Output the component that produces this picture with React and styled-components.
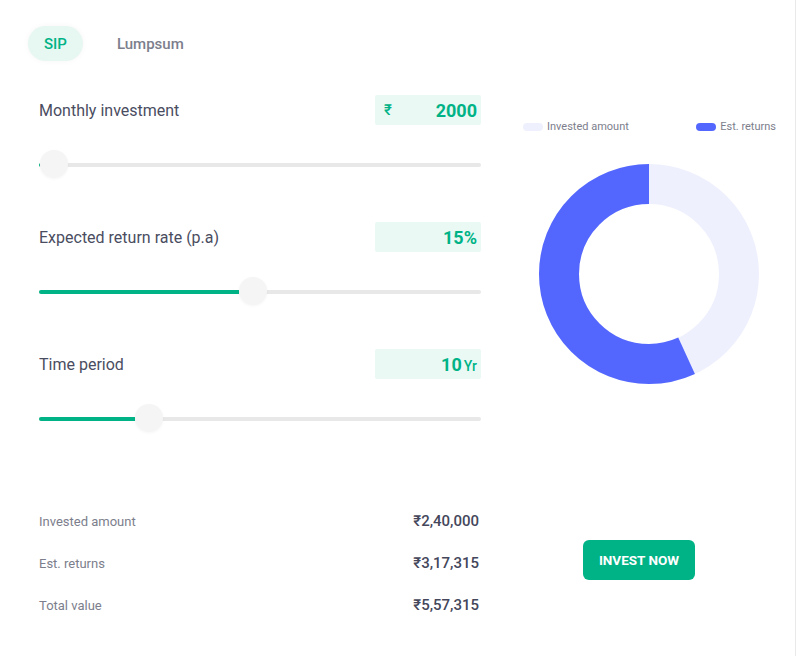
import React from "react";
import styled, { createGlobalStyle } from "styled-components";

const Global = createGlobalStyle`
  * { box-sizing: border-box; }
  html, body { margin: 0; padding: 0; background: #ffffff; }
  body { font-family: Roboto, "Noto Sans", Arial, sans-serif; -webkit-font-smoothing: antialiased; }
`;

const Card = styled.div`
  width: 796px;
  min-height: 656px;
  border-right: 1px solid #e9e9eb;
  background: #fff;
  padding: 26px 0 0 0;
`;

const Tabs = styled.div`
  display: flex;
  align-items: center;
  gap: 19px;
  padding-left: 28px;
`;

const Tab = styled.button`
  border: none;
  font-family: Roboto, Arial, sans-serif;
  font-size: 15px;
  font-weight: 500;
  height: 35px;
  padding: 0 ${(p) => (p.$active ? "16px" : "15px")};
  border-radius: 18px;
  cursor: pointer;
  background: ${(p) => (p.$active ? "#e7f7f2" : "transparent")};
  color: ${(p) => (p.$active ? "#00b386" : "#7c7e8c")};
  box-shadow: ${(p) => (p.$active ? "0 0 6px rgba(0,0,0,0.04)" : "none")};
`;

const Top = styled.div`
  display: flex;
  padding-left: 39px;
  margin-top: 34px;
`;

const Controls = styled.div`
  width: 442px;
  display: flex;
  flex-direction: column;
  gap: 43px;
`;

const Block = styled.div`
  display: flex;
  flex-direction: column;
  gap: 26px;
`;

const FieldHead = styled.div`
  display: flex;
  justify-content: space-between;
  align-items: center;
  height: 30px;
`;

const Label = styled.span`
  font-size: 16px;
  color: #4a4d5f;
`;

const ValueBox = styled.div`
  width: 106px;
  height: 30px;
  background: #ebf9f5;
  border-radius: 2px;
  display: flex;
  align-items: center;
  justify-content: space-between;
  padding: 0 4px 0 9px;
  color: #00b386;
`;

const Prefix = styled.span`
  font-size: 15px;
  font-weight: 500;
`;

const Amount = styled.span`
  font-size: 18px;
  font-weight: 700;
  display: flex;
  align-items: baseline;
`;

const Suffix = styled.span`
  font-size: 14px;
  font-weight: 500;
  margin-left: 2px;
`;

const SliderWrap = styled.div`
  position: relative;
  height: 28px;
  display: flex;
  align-items: center;
`;

const Track = styled.div`
  width: 100%;
  height: 4px;
  background: #e8e8e8;
  border-radius: 2px;
  overflow: hidden;
`;

const Fill = styled.div`
  height: 100%;
  background: #00b386;
`;

const Thumb = styled.div`
  position: absolute;
  top: -1px;
  width: 28px;
  height: 28px;
  border-radius: 50%;
  background: #f5f5f5;
  box-shadow: 0 1px 3px rgba(0, 0, 0, 0.04);
`;

const ChartCol = styled.div`
  flex: 1;
  margin-left: 22px;
  display: flex;
  flex-direction: column;
  align-items: center;
  padding-top: 25px;
`;

const Legend = styled.div`
  width: 100%;
  display: flex;
  justify-content: space-between;
  padding: 0 19px 0 20px;
`;

const LegendItem = styled.div`
  display: flex;
  align-items: center;
  gap: 4px;
  font-size: 11px;
  color: #7c7e8c;
`;

const Swatch = styled.span`
  width: 20px;
  height: 8px;
  border-radius: 4px;
  background: ${(p) => p.$color};
`;

const Donut = styled.svg`
  margin-top: 31px;
  display: block;
`;

const Bottom = styled.div`
  display: flex;
  align-items: center;
  padding-left: 39px;
  margin-top: 67px;
`;

const Results = styled.div`
  width: 442px;
  display: flex;
  flex-direction: column;
`;

const ResultRow = styled.div`
  height: 42px;
  display: flex;
  justify-content: space-between;
  align-items: center;
  padding-right: 2px;
`;

const ResultLabel = styled.span`
  font-size: 13px;
  color: #7c7e8c;
`;

const ResultValue = styled.span`
  font-size: 15px;
  font-weight: 500;
  color: #44475b;
`;

const InvestButton = styled.button`
  margin-left: 102px;
  margin-bottom: 6px;
  width: 112px;
  height: 40px;
  border: none;
  border-radius: 6px;
  background: #00b386;
  color: #fff;
  font-family: Roboto, Arial, sans-serif;
  font-size: 13.5px;
  font-weight: 700;
  cursor: pointer;
`;

const Slider = ({ pct }) => {
  const left = pct * 414;
  return (
    <SliderWrap>
      <Track>
        <Fill style={{ width: `${left}px` }} />
      </Track>
      <Thumb style={{ left: `${left}px` }} />
    </SliderWrap>
  );
};

const fields = [
  { label: "Monthly investment", prefix: "₹", value: "2000", pct: 1 / 414 },
  { label: "Expected return rate (p.a)", value: "15%", pct: 14 / 29 },
  { label: "Time period", value: "10", suffix: "Yr", pct: 9 / 39 },
];

const results = [
  ["Invested amount", "₹2,40,000"],
  ["Est. returns", "₹3,17,315"],
  ["Total value", "₹5,57,315"],
];

const DonutChart = () => {
  const r = 90;
  const C = 2 * Math.PI * r;
  const invested = 240000 / 557315;
  const ret = 1 - invested;
  return (
    <Donut width="220" height="220" viewBox="0 0 220 220">
      <g transform="rotate(-90 110 110)">
        <circle cx="110" cy="110" r={r} fill="none" stroke="#eef0fd" strokeWidth="40" />
        <circle
          cx="110"
          cy="110"
          r={r}
          fill="none"
          stroke="#5367ff"
          strokeWidth="40"
          strokeDasharray={`${ret * C} ${C}`}
          strokeDashoffset={-invested * C}
        />
      </g>
    </Donut>
  );
};

export default function App() {
  return (
    <>
      <Global />
      <Card>
        <Tabs>
          <Tab $active>SIP</Tab>
          <Tab>Lumpsum</Tab>
        </Tabs>
        <Top>
          <Controls>
            {fields.map((f) => (
              <Block key={f.label}>
                <FieldHead>
                  <Label>{f.label}</Label>
                  <ValueBox>
                    <Prefix>{f.prefix || ""}</Prefix>
                    <Amount>
                      {f.value}
                      {f.suffix && <Suffix>{f.suffix}</Suffix>}
                    </Amount>
                  </ValueBox>
                </FieldHead>
                <Slider pct={f.pct} />
              </Block>
            ))}
          </Controls>
          <ChartCol>
            <Legend>
              <LegendItem>
                <Swatch $color="#eef0fd" />
                Invested amount
              </LegendItem>
              <LegendItem>
                <Swatch $color="#5367ff" />
                Est. returns
              </LegendItem>
            </Legend>
            <DonutChart />
          </ChartCol>
        </Top>
        <Bottom>
          <Results>
            {results.map(([l, v]) => (
              <ResultRow key={l}>
                <ResultLabel>{l}</ResultLabel>
                <ResultValue>{v}</ResultValue>
              </ResultRow>
            ))}
          </Results>
          <InvestButton>INVEST NOW</InvestButton>
        </Bottom>
      </Card>
    </>
  );
}
